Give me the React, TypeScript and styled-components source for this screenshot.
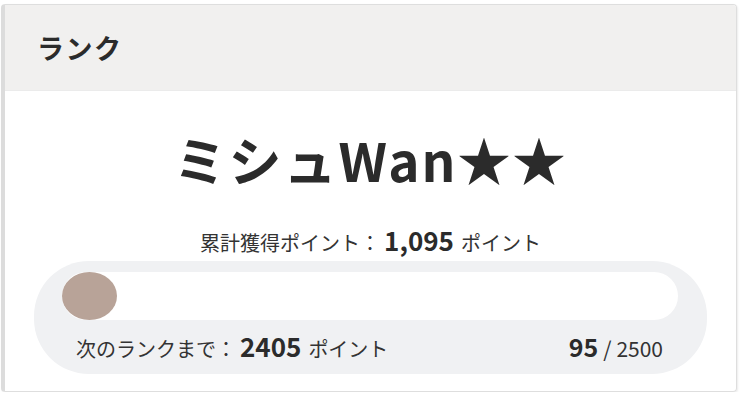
import React from "react";
import styled, { createGlobalStyle } from "styled-components";

const Global = createGlobalStyle`
  html, body { margin: 0; padding: 0; background: #ffffff; }
  body { font-family: "Noto Sans CJK JP", "Noto Sans", sans-serif; color: #333333; }
`;

const Page = styled.div`
  padding: 4px 3px 0 1px;
`;

const Card = styled.section`
  border: 1px solid #dedede;
  border-left: 4px solid #dcdcdc;
  border-radius: 4px;
  overflow: hidden;
  box-shadow: 1px 1px 2px rgba(0, 0, 0, 0.08);
  height: 388px;
  box-sizing: border-box;
`;

const Header = styled.header`
  background: #f1f0ef;
  height: 85px;
  display: flex;
  align-items: center;
  padding-left: 32px;
  border-bottom: 1px solid #ebebeb;
  font-size: 27px;
  font-weight: 700;
  color: #2b2b2b;
  letter-spacing: 1.5px;
`;

const Body = styled.div`
  display: flex;
  flex-direction: column;
  align-items: center;
  padding: 28px 29px 0 29px;
`;

const RankName = styled.h1`
  margin: 0;
  font-size: 53px;
  font-weight: 700;
  line-height: 80px;
  color: #2b2b2b;
  letter-spacing: 2px;
`;

const Total = styled.p`
  margin: 26px 0 0 0;
  font-size: 20px;
  line-height: 30px;
  color: #333333;
  display: flex;
  align-items: baseline;
`;

const Strong = styled.strong<{ $size?: number }>`
  font-size: ${(p) => p.$size ?? 26}px;
  font-weight: 700;
  margin: 0 7px 0 4px;
  color: #2b2b2b;
`;

const Track = styled.div`
  margin-top: 3px;
  align-self: stretch;
  background: #f0f1f3;
  border-radius: 55px;
  padding: 11px 29px 9px 28px;
  display: flex;
  flex-direction: column;
  gap: 10px;
`;

const Bar = styled.div`
  height: 48px;
  background: #ffffff;
  border-radius: 24px;
  display: flex;
`;

const Fill = styled.div`
  min-width: 55px;
  height: 48px;
  border-radius: 50%;
  background: #b8a398;
`;

const Footer = styled.div`
  display: flex;
  justify-content: space-between;
  align-items: baseline;
  padding: 0 15px 0 14px;
  font-size: 20px;
  line-height: 32px;
  color: #333333;
`;

const Left = styled.div`
  display: flex;
  align-items: baseline;
`;

const Count = styled.div`
  display: flex;
  align-items: baseline;
  gap: 5px;
  font-size: 21px;
`;

const Bold = styled.span`
  font-weight: 700;
  font-size: 25px;
  color: #2b2b2b;
`;

export default function App() {
  const current = 95;
  const max = 2500;
  return (
    <Page>
      <Global />
      <Card>
        <Header>ランク</Header>
        <Body>
          <RankName>ミシュWan★★</RankName>
          <Total>
            累計獲得ポイント：<Strong>1,095</Strong>ポイント
          </Total>
          <Track>
            <Bar>
              <Fill style={{ width: `${(current / max) * 100}%` }} />
            </Bar>
            <Footer>
              <Left>
                次のランクまで：<Strong $size={26}>2405</Strong>ポイント
              </Left>
              <Count>
                <Bold>{current}</Bold>/<span>{max}</span>
              </Count>
            </Footer>
          </Track>
        </Body>
      </Card>
    </Page>
  );
}
